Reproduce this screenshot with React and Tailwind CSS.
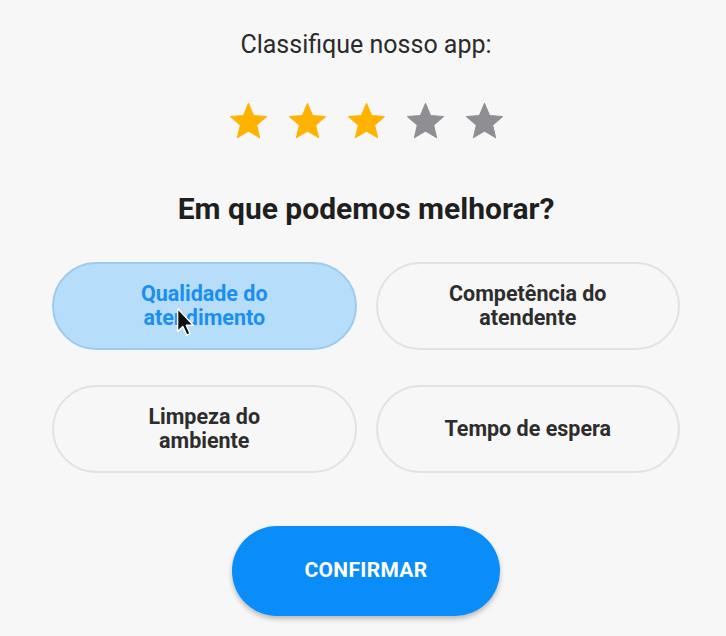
import { useState } from "react";

const options = [
  "Qualidade do atendimento",
  "Competência do atendente",
  "Limpeza do ambiente",
  "Tempo de espera",
];

function Star({ filled }) {
  return (
    <svg viewBox="0 0 24 24" className="w-[43px] h-[43px]">
      <path
        d="M12 17.27L18.18 21l-1.64-7.03L22 9.24l-7.19-.61L12 2 9.19 8.63 2 9.24l5.46 4.73L5.82 21z"
        fill={filled ? "#ffb300" : "#8f8e93"}
        stroke={filled ? "#ffb300" : "#8f8e93"}
        strokeWidth="0.6"
        strokeLinejoin="round"
      />
    </svg>
  );
}

// mouse pointer sitting over the selected option
function Cursor() {
  return (
    <svg
      viewBox="0 0 12 19"
      className="absolute left-[122px] top-[43px] w-[19px] h-[30px] pointer-events-none"
    >
      <path
        d="M1 1 L1 15.5 L4.3 12.4 L6.8 17.8 L8.9 16.9 L6.5 11.6 L11 11.6 Z"
        fill="#111"
        stroke="#fff"
        strokeWidth="0.9"
        strokeLinejoin="round"
      />
    </svg>
  );
}

export default function App() {
  const [rating, setRating] = useState(3);
  const [selected, setSelected] = useState(0);

  return (
    <div
      className="min-h-[636px] bg-[#f7f7f7] pl-[6px] flex flex-col items-center"
      style={{ fontFamily: "Roboto, 'Noto Sans', sans-serif" }}
    >
      <p className="mt-[29px] text-[25px] leading-[32px] text-[#2b2b2b]">Classifique nosso app:</p>

      <div className="mt-[39px] flex gap-[16px]">
        {[1, 2, 3, 4, 5].map((n) => (
          <button key={n} onClick={() => setRating(n)}>
            <Star filled={n <= rating} />
          </button>
        ))}
      </div>

      <h2 className="mt-[48px] text-[30px] leading-[36px] font-bold text-[#1f1f1f]">
        Em que podemos melhorar?
      </h2>

      <div className="mt-[35px] grid grid-cols-2 gap-x-[19px] gap-y-[35px] w-[628px]">
        {options.map((opt, i) => (
          <button
            key={opt}
            onClick={() => setSelected(i)}
            className={
              i === selected
                ? "relative h-[88px] rounded-full border-2 border-[#9ccbee] bg-[#b6defb] px-[60px] text-[21.5px] leading-[24px] font-bold text-[#1b8ef2]"
                : "relative h-[88px] rounded-full border-2 border-[#e2e2e2] bg-[#f7f7f7] px-[60px] text-[21.5px] leading-[24px] font-bold text-[#2d2d2d]"
            }
          >
            {opt}
            {i === 0 && <Cursor />}
          </button>
        ))}
      </div>

      <button className="mt-[53px] w-[268px] h-[90px] rounded-full bg-[#0a8df8] text-white text-[21px] font-bold tracking-[0.3px] shadow-[0_3px_5px_rgba(0,0,0,0.25)]">
        CONFIRMAR
      </button>
    </div>
  );
}
